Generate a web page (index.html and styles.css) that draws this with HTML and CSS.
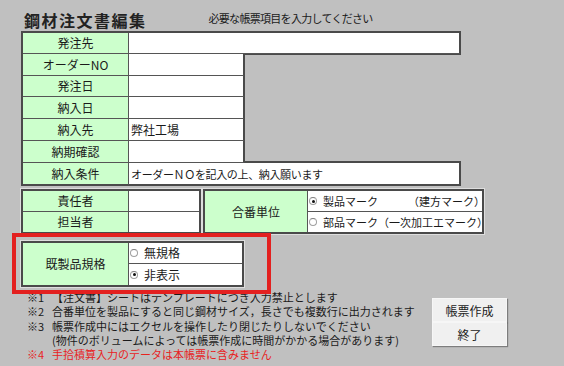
FILE: index.html
```html
<!DOCTYPE html>
<html lang="ja">
<head>
    <meta charset="UTF-8">
    <title>鋼材注文書編集</title>
    <link rel="stylesheet" href="styles.css">
</head>
<body>
<div class="page">
    <div class="head">
        <h1 class="title">鋼材注文書編集</h1>
        <p class="guide">必要な帳票項目を入力してください</p>
    </div>

    <!-- 注文情報 -->
    <div class="order">
        <div class="lbl">発注先</div><div class="val wide"></div>
        <div class="lbl">オーダーNO</div><div class="val"></div><div class="blank"></div>
        <div class="lbl">発注日</div><div class="val"></div>
        <div class="lbl">納入日</div><div class="val"></div>
        <div class="lbl">納入先</div><div class="val">弊社工場</div>
        <div class="lbl">納期確認</div><div class="val"></div>
        <div class="lbl end">納入条件</div><div class="val wide end small">オーダーＮＯを記入の上、納入願います</div>
    </div>

    <div class="mid">
        <div class="box staff">
            <div class="lbl">責任者</div><div class="val"></div>
            <div class="lbl end">担当者</div><div class="val end"></div>
        </div>
        <div class="box mark">
            <div class="lbl end tall">合番単位</div>
            <div class="val opt small"><span class="radio on"></span>製品マーク<span class="sub">（建方マーク）</span></div>
            <div class="val opt small end"><span class="radio"></span>部品マーク（一次加工エマーク）</div>
        </div>
    </div>

    <div class="box kind">
        <div class="lbl end tall">既製品規格</div>
        <div class="val opt"><span class="radio"></span>無規格</div>
        <div class="val opt end"><span class="radio on"></span>非表示</div>
    </div>

    <div class="foot">
        <div class="notes">
            <p><span class="no">※1</span>【注文書】シートはテンプレートにつき入力禁止とします</p>
            <p><span class="no">※2</span>合番単位を製品にすると同じ鋼材サイズ，長さでも複数行に出力されます</p>
            <p><span class="no">※3</span>帳票作成中にはエクセルを操作したり閉じたりしないでください</p>
            <p><span class="no"></span>(物件のボリュームによっては帳票作成に時間がかかる場合があります)</p>
            <p class="warn"><span class="no">※4</span>手拾積算入力のデータは本帳票に含みません</p>
        </div>
        <div class="buttons">
            <button class="btn">帳票作成</button>
            <button class="btn">終了</button>
        </div>
    </div>

    <!-- 強調枠 -->
    <div class="mark-frame"></div>
</div>
</body>
</html>
```

FILE: styles.css
```css
*{padding:0;margin:0;box-sizing:border-box;}
body{background:#c0c0c0;font-family:"Noto Sans CJK JP","Liberation Sans",sans-serif;font-size:12px;color:#1a1a1a;}
.page{position:relative;width:564px;height:366px;padding-top:8px;}

.head{display:flex;align-items:center;height:23px;padding-left:24px;}
.title{font-size:16px;font-weight:bold;letter-spacing:1.5px;line-height:18px;color:#222;}
.guide{font-size:11px;letter-spacing:-0.7px;margin-left:62px;line-height:14px;margin-top:-3px;}

/* セル共通 */
.lbl{background:#ccffcc;border-right:1px solid #555;border-bottom:1px solid #555;
    display:flex;align-items:center;justify-content:center;line-height:14px;}
.val{background:#fff;border-bottom:1px solid #555;display:flex;align-items:center;padding-left:2px;line-height:14px;white-space:nowrap;}
.small{font-size:11px;}

.order{display:grid;width:440px;margin-left:21px;
    grid-template-columns:106px 116px 216px;
    grid-template-rows:21px 22px 21px 22px 22px 22px 23px;
    border-top:2px solid #4a4a4a;border-left:2px solid #4a4a4a;}
.order .val{border-right:2px solid #4a4a4a;}
.order .wide{grid-column:span 2;}
.order .end{border-bottom:2px solid #4a4a4a;}
.order .small{letter-spacing:-0.35px;}
.blank{grid-row:span 5;border-top:1px solid #4a4a4a;border-bottom:2px solid #4a4a4a;}

.box{display:grid;border:2px solid #4a4a4a;box-shadow:0 0 0 1px #dedede;}
.box .end{border-bottom:none;}
.tall{grid-row:span 2;}

.mid{display:flex;margin-top:3px;margin-left:21px;}
.staff{grid-template-columns:106px 70px;grid-template-rows:21px 20px;}
.mark{grid-template-columns:103px 174px;grid-template-rows:21px 20px;margin-left:2px;}
.mark .opt{padding-left:1px;}
.sub{margin-left:30px;}

.kind{width:223px;margin:7px 0 0 21px;grid-template-columns:106px 113px;grid-template-rows:21px 21px;}
.opt{padding-left:1px;}

.radio{display:inline-block;width:8px;height:8px;border:1px solid #a0a0a0;border-top-color:#808080;
    border-radius:50%;background:#fff;margin-right:6px;position:relative;flex:none;}
.radio.on::after{content:"";position:absolute;left:1.5px;top:1.5px;width:3px;height:3px;border-radius:50%;background:#111;}

.foot{display:flex;margin-top:3px;}
.notes{width:432px;padding-left:27px;font-size:11px;line-height:14.3px;}
.notes p{display:flex;white-space:nowrap;}
.no{width:25px;flex:none;}
.warn{color:#e8231f;}

.buttons{display:flex;flex-direction:column;margin-top:8px;}
.btn{width:75px;height:24px;background:#f0f0f0;border:1px solid #f6f6f6;
    box-shadow:1px 1px 1px rgba(0,0,0,0.35);font-family:inherit;font-size:12px;color:#222;}

.mark-frame{position:absolute;left:12px;top:233px;width:259px;height:61px;border:4px solid #e3201f;}
```
